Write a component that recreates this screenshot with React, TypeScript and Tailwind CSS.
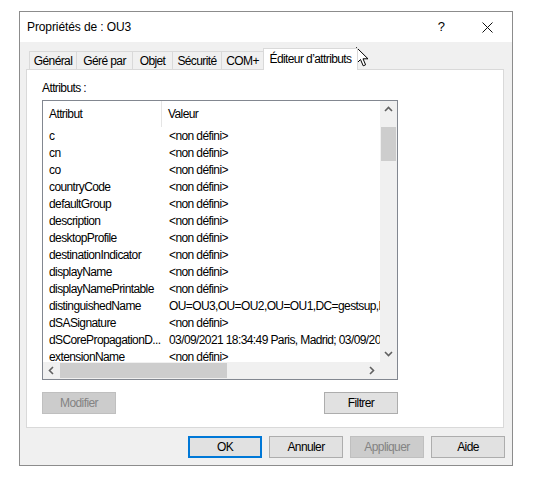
import React from 'react'

const font = "'Liberation Sans', Arial, sans-serif"

interface Row {
  name: string
  value: string
}

const rows: Array<Row> = [
  { name: 'c', value: '<non défini>' },
  { name: 'cn', value: '<non défini>' },
  { name: 'co', value: '<non défini>' },
  { name: 'countryCode', value: '<non défini>' },
  { name: 'defaultGroup', value: '<non défini>' },
  { name: 'description', value: '<non défini>' },
  { name: 'desktopProfile', value: '<non défini>' },
  { name: 'destinationIndicator', value: '<non défini>' },
  { name: 'displayName', value: '<non défini>' },
  { name: 'displayNamePrintable', value: '<non défini>' },
  { name: 'distinguishedName', value: 'OU=OU3,OU=OU2,OU=OU1,DC=gestsup,DC=local' },
  { name: 'dSASignature', value: '<non défini>' },
  { name: 'dSCorePropagationD...', value: '03/09/2021 18:34:49 Paris, Madrid; 03/09/2021 18:34:49' },
  { name: 'extensionName', value: '<non défini>' },
]

const tabs = [
  { label: 'Général', w: 'w-[48px]' },
  { label: 'Géré par', w: 'w-[57px]' },
  { label: 'Objet', w: 'w-[41px]' },
  { label: 'Sécurité', w: 'w-[50px]' },
  { label: 'COM+', w: 'w-[43px]' },
]

function Chevron({ dir }: { dir: 'up' | 'down' | 'left' | 'right' }) {
  const rot = { up: 0, right: 90, down: 180, left: 270 }[dir]
  return (
    <svg width="9" height="9" viewBox="0 0 9 9" style={{ transform: `rotate(${rot}deg)` }}>
      <polyline points="1,6 4.5,2.5 8,6" fill="none" stroke="#606060" strokeWidth="1.6" />
    </svg>
  )
}

function Button({
  label,
  disabled,
  primary,
}: {
  label: string
  disabled?: boolean
  primary?: boolean
}) {
  let cls = 'bg-[#e1e1e1] border border-[#adadad] text-black'
  if (disabled) cls = 'bg-[#cccccc] border border-[#bfbfbf] text-[#838383]'
  if (primary) cls = 'bg-[#e1e1e1] border-2 border-[#0078d7] text-black'
  return (
    <div className={`w-[74px] h-[22px] flex items-center justify-center ${cls}`}>
      {label}
    </div>
  )
}

export default function App() {
  return (
    <div
      className="relative w-[538px] h-[486px] bg-white pt-[11px] pl-[19px] text-[12px] tracking-[-0.6px] text-black"
      style={{ fontFamily: font }}
    >
      <div className="w-[494px] h-[455px] border border-[#8c8c8c] flex flex-col">
        {/* title bar */}
        <div className="h-[30px] bg-white flex items-center">
          <span className="pl-[7px] flex-1 tracking-[-0.1px]">Propriétés de : OU3</span>
          <div className="w-[46px] h-full flex items-center justify-center text-[13px]">?</div>
          <div className="w-[46px] h-full mr-[2px] flex items-center justify-center">
            <svg width="11" height="11" viewBox="0 0 11 11">
              <path d="M0.5 0.5 L10.5 10.5 M10.5 0.5 L0.5 10.5" stroke="#111" strokeWidth="1" />
            </svg>
          </div>
        </div>

        {/* body */}
        <div className="flex-1 bg-[#f0f0f0] pt-[6px] pl-[6px] pr-[8px]">
          {/* tabs */}
          <div className="flex items-end h-[21px] pl-[3px]">
            {tabs.map((t, i) => (
              <div
                key={t.label}
                className={`${t.w} h-[18px] ${i > 0 ? '-ml-px' : ''} border border-b-0 border-[#d9d9d9] bg-[#f0f0f0] flex items-center justify-center`}
              >
                {t.label}
              </div>
            ))}
            <div className="relative z-10 -ml-px mb-[-1px] w-[95px] h-[22px] border border-b-0 border-[#d9d9d9] bg-white flex items-center justify-center pb-[1px]">
              Éditeur d’attributs
            </div>
          </div>

          {/* panel */}
          <div className="h-[359px] border border-[#d9d9d9] bg-white pl-[15px] pt-[11px]">
            <div className="leading-[15px]">Attributs :</div>

            {/* list view */}
            <div className="mt-[4px] w-[356px] h-[280px] border border-[#828790] grid grid-cols-[337px_17px] grid-rows-[261px_17px]">
              <div className="overflow-hidden bg-white">
                <div className="flex h-[26px] items-center">
                  <div className="w-[119px] h-full pl-[6px] flex items-center border-r border-[#e5e5e5]">
                    Attribut
                  </div>
                  <div className="pl-[6px]">Valeur</div>
                </div>
                {rows.map((r) => (
                  <div key={r.name} className="flex h-[17px] items-center whitespace-nowrap">
                    <div className="w-[120px] shrink-0 pl-[6px] overflow-hidden">{r.name}</div>
                    <div className="pl-[6px]">{r.value}</div>
                  </div>
                ))}
              </div>

              {/* vertical scrollbar */}
              <div className="bg-[#f0f0f0] flex flex-col items-center">
                <div className="h-[17px] flex items-center justify-center">
                  <Chevron dir="up" />
                </div>
                <div className="mt-[9px] w-[15px] h-[34px] bg-[#cdcdcd]" />
                <div className="flex-1" />
                <div className="h-[17px] flex items-center justify-center">
                  <Chevron dir="down" />
                </div>
              </div>

              {/* horizontal scrollbar */}
              <div className="bg-[#f0f0f0] flex items-center">
                <div className="w-[17px] flex items-center justify-center">
                  <Chevron dir="left" />
                </div>
                <div className="w-[167px] h-[15px] bg-[#cdcdcd]" />
                <div className="flex-1" />
                <div className="w-[17px] flex items-center justify-center">
                  <Chevron dir="right" />
                </div>
              </div>
              <div className="bg-[#f0f0f0]" />
            </div>

            <div className="mt-[12px] w-[356px] flex justify-between">
              <Button label="Modifier" disabled />
              <Button label="Filtrer" />
            </div>
          </div>

          {/* dialog buttons */}
          <div className="mt-[8px] -mr-[1px] flex justify-end gap-[7px]">
            <Button label="OK" primary />
            <Button label="Annuler" />
            <Button label="Appliquer" disabled />
            <Button label="Aide" />
          </div>
        </div>
      </div>

      {/* mouse cursor */}
      <svg
        className="absolute left-[356px] top-[47px]"
        width="13"
        height="21"
        viewBox="0 0 13 21"
      >
        <path
          d="M0.5 0.5 L0.5 16.5 L4.5 12.5 L7.2 18.8 L9.6 17.8 L7 11.8 L12 11.8 Z"
          fill="white"
          stroke="black"
          strokeWidth="1"
        />
      </svg>
    </div>
  )
}
